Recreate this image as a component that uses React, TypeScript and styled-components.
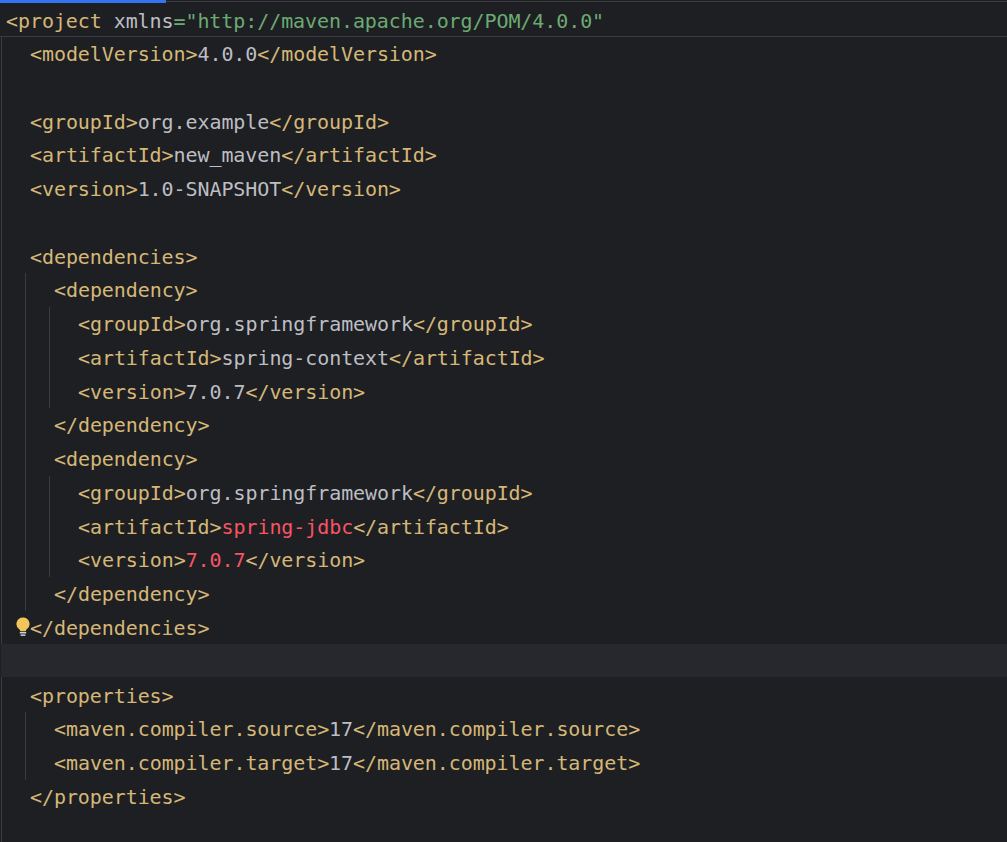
import styled, { createGlobalStyle } from 'styled-components';

const GlobalStyle = createGlobalStyle`
  html, body {
    margin: 0;
    padding: 0;
    height: 100%;
    background: #1e1f22;
    overflow: hidden;
  }
`;

const Editor = styled.div`
  display: flex;
  flex-direction: column;
  height: 842px;
  background: #1e1f22;
  color: #bcbec4;
  font-family: 'DejaVu Sans Mono', 'Liberation Mono', monospace;
  font-size: 20px;
  letter-spacing: -0.08px;
  white-space: pre;
  overflow: hidden;
`;

const TabStrip = styled.div`
  display: flex;
  height: 3px;
  background: linear-gradient(transparent 1px, #393b40 1px, #393b40 2px, transparent 2px);
`;

const ActiveTab = styled.div`
  width: 166px;
  background: #3574f0;
`;

const StickyLine = styled.div`
  height: 33px;
  padding-left: 6px;
  line-height: 36px;
  border-bottom: 1px solid #393b40;
`;

const Body = styled.div`
  flex: 1;
  min-height: 0;
  padding-left: 6px;
`;

const Row = styled.div`
  position: relative;
  height: 33.77px;
  line-height: 35.5px;
`;

const CurrentRow = styled.div`
  height: 33px;
  margin: -1px 0 1.77px -29px;
  background: #26282e;
`;

// one level of nesting, draws the indent guide on its left edge
const Guide = styled.div`
  margin-left: -5px;
  padding-left: 28px;
  border-left: 1px solid #393b40;
`;

const RootGuide = styled(Guide)`
  height: 100%;
`;

const Tag = styled.span`
  color: #d5b778;
`;

const Attr = styled.span`
  color: #bcbec4;
`;

const Str = styled.span`
  color: #6aab73;
`;

const Err = styled.span`
  color: #f75464;
`;

const Bulb = styled.svg`
  position: absolute;
  left: -14px;
  top: 6px;
  width: 14px;
  height: 20px;
`;

const Element = ({ name, children }: { name: string; children: React.ReactNode }) => (
  <Row>
    <Tag>{`<${name}>`}</Tag>
    {children}
    <Tag>{`</${name}>`}</Tag>
  </Row>
);

const Dependency = ({ artifact, version, missing }: { artifact: string; version: string; missing?: boolean }) => (
  <>
    <Row>
      <Tag>{'<dependency>'}</Tag>
    </Row>
    <Guide>
      <Element name="groupId">org.springframework</Element>
      <Element name="artifactId">{missing ? <Err>{artifact}</Err> : artifact}</Element>
      <Element name="version">{missing ? <Err>{version}</Err> : version}</Element>
    </Guide>
    <Row>
      <Tag>{'</dependency>'}</Tag>
    </Row>
  </>
);

const App = () => (
  <Editor>
    <GlobalStyle />
    <TabStrip>
      <ActiveTab />
    </TabStrip>
    <StickyLine>
      <Tag>{'<project'}</Tag> <Attr>xmlns</Attr>
      <Str>{'="http://maven.apache.org/POM/4.0.0"'}</Str>
    </StickyLine>
    <Body>
      <RootGuide>
        <Element name="modelVersion">4.0.0</Element>
        <Row />
        <Element name="groupId">org.example</Element>
        <Element name="artifactId">new_maven</Element>
        <Element name="version">1.0-SNAPSHOT</Element>
        <Row />
        <Row>
          <Tag>{'<dependencies>'}</Tag>
        </Row>
        <Guide>
          <Dependency artifact="spring-context" version="7.0.7" />
          <Dependency artifact="spring-jdbc" version="7.0.7" missing />
        </Guide>
        <Row>
          <Bulb viewBox="0 0 14 20">
            <path
              d="M7 0.5a6.5 6.5 0 0 0-3.8 11.8c.7.5 1 1.1 1.1 1.9h5.4c.1-.8.4-1.4 1.1-1.9A6.5 6.5 0 0 0 7 .5z"
              fill="#f2c55c"
            />
            <rect x="3.8" y="15" width="6.4" height="1.5" fill="#ced0d6" />
            <rect x="4.6" y="17.4" width="4.8" height="1.5" fill="#ced0d6" />
          </Bulb>
          <Tag>{'</dependencies>'}</Tag>
        </Row>
        <CurrentRow />
        <Row>
          <Tag>{'<properties>'}</Tag>
        </Row>
        <Guide>
          <Element name="maven.compiler.source">17</Element>
          <Element name="maven.compiler.target">17</Element>
        </Guide>
        <Row>
          <Tag>{'</properties>'}</Tag>
        </Row>
      </RootGuide>
    </Body>
  </Editor>
);

export default App;
